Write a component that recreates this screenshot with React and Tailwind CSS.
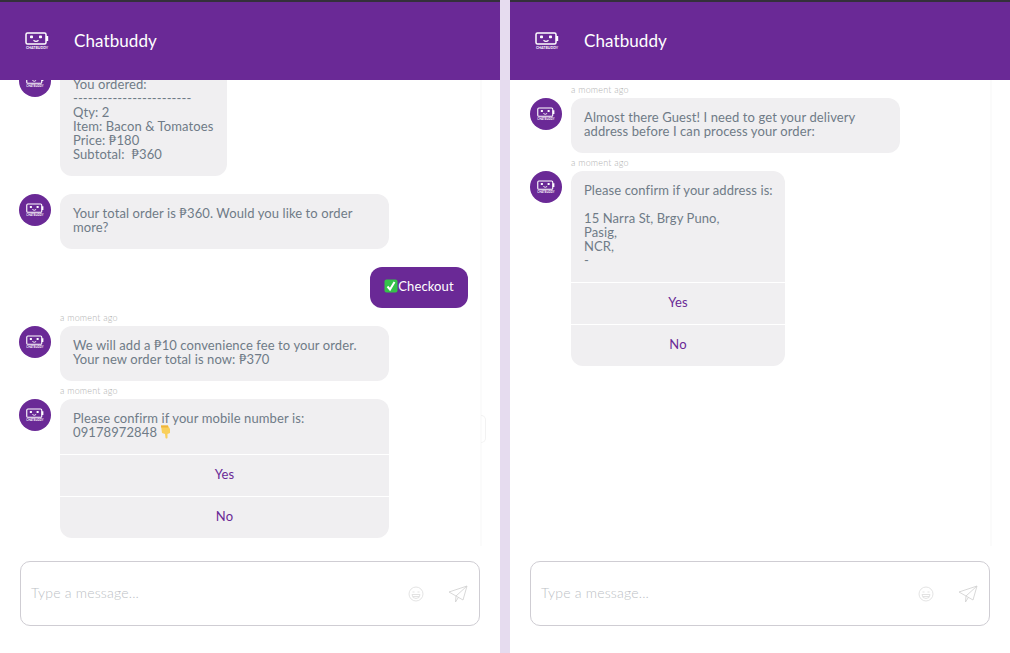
import React from 'react';

const BotLogo = ({ className }) => (
  <svg viewBox="0 0 24 18" className={className} fill="none">
    {/* battery shaped robot head */}
    <rect x="1" y="1" width="20" height="11" rx="1.5" stroke="#fff" strokeWidth="1.5" />
    <rect x="21" y="4" width="2.2" height="5" fill="#fff" />
    <rect x="5" y="3.6" width="3" height="2.6" rx="0.8" fill="#fff" />
    <rect x="14" y="3.6" width="3" height="2.6" rx="0.8" fill="#fff" />
    <path d="M8.5 8.3 Q11 10.6 13.5 8.3" stroke="#fff" strokeWidth="1.2" />
    <text x="12" y="17" textAnchor="middle" fontSize="3.6" fill="#fff" fontFamily="Lato, sans-serif" fontWeight="700">CHATBUDDY</text>
  </svg>
);

const Avatar = () => (
  <div className="w-8 h-8 shrink-0 rounded-full bg-[#6a2996] flex items-center justify-center">
    <BotLogo className="w-[18px] h-[14px]" />
  </div>
);

const CheckEmoji = () => (
  <svg viewBox="0 0 14 14" className="inline-block w-[14px] h-[14px] align-[-2px]">
    <rect x="0.5" y="0.5" width="13" height="13" rx="2" fill="#35c24a" />
    <path d="M3.5 7.5 L6 10.5 L10.5 3" stroke="#fff" strokeWidth="2" fill="none" />
  </svg>
);

const PointDownEmoji = () => (
  <svg viewBox="0 0 12 14" className="inline-block w-[12px] h-[14px] align-top ml-[3px]">
    <path d="M1 0.5 H8 L10 4 V8 L7.5 9 V13 Q6.5 14 5.5 13 L5 9 L2 8 Z" fill="#f9cf5a" />
    <rect x="1" y="0.5" width="7" height="2" fill="#efb43c" />
  </svg>
);

const SmileIcon = () => (
  <svg viewBox="0 0 16 16" className="w-4 h-4" fill="none" stroke="#dcdcdc" strokeWidth="0.8">
    <circle cx="8" cy="8" r="7" />
    <path d="M4.5 6 H6.5 M9.5 6 H11.5" />
    <path d="M4 8.5 H12 Q12 12.5 8 12.5 Q4 12.5 4 8.5 Z" />
    <path d="M5 10.5 H11" />
  </svg>
);

const SendIcon = () => (
  <svg viewBox="0 0 20 18" className="w-5 h-[18px]" fill="none" stroke="#d4d4d4" strokeWidth="0.9" strokeLinejoin="round">
    <path d="M1 7 L19 1 L15 15 L8 11 Z" />
    <path d="M19 1 L8 11 L7.5 17 L10.5 12.2" />
  </svg>
);

const Message = ({ time, children, width = 'w-[329px]' }) => (
  <div className={time ? 'mt-[5px]' : 'mt-[18px]'}>
    {time && <div className="h-[9px] mb-[4px] ml-[41px] text-[9px] leading-[9px] font-light tracking-[0.2px] text-[#b0b0b0]">a moment ago</div>}
    <div className="flex gap-[9px] items-start">
      <Avatar />
      <div className={`${width} bg-[#f0eff1] rounded-xl text-[#6f7b87] overflow-hidden`}>{children}</div>
    </div>
  </div>
);

const BubbleText = ({ children }) => (
  <div className="pl-[13px] pr-3 pt-[12px] pb-[15px] whitespace-pre-wrap">{children}</div>
);

const QuickReply = ({ label }) => (
  <div className="h-[42px] pb-[3px] border-t border-white flex items-center justify-center text-[#6a2996]">{label}</div>
);

const Panel = ({ sidePad, justify, children, handle }) => (
  <div className="relative w-[500px] h-full flex flex-col bg-white">
    <div className="h-20 shrink-0 border-t-2 border-[#34303a] bg-[#6a2996] flex items-center pl-[25px] z-10">
      <BotLogo className="w-6 h-[18px]" />
      <span className="ml-[25px] text-[17px] tracking-[0.1px] text-white">Chatbuddy</span>
    </div>
    <div className={`flex-1 min-h-0 overflow-hidden flex flex-col ${justify} ${sidePad} pb-[8px] text-[13px] leading-[14px] tracking-[0.1px] ml-[6px] mr-[18px] border-r-2 border-[#fbfbfb]`}>
      {children}
    </div>
    {handle && <div className="absolute left-[481px] top-[415px] w-[5px] h-[28px] rounded-r-full border border-l-0 border-[#f2f2f2]" />}
    <div className="h-[107px] shrink-0 px-5 pt-[15px]">
      <div className="h-[65px] border border-[#cfcdd3] rounded-[10px] flex items-center pl-[10px] pr-[11px]">
        <span className="flex-1 text-sm tracking-[0.2px] pb-[2px] text-[#bcbfc5] font-light">Type a message...</span>
        <SmileIcon />
        <div className="ml-[24px]"><SendIcon /></div>
      </div>
    </div>
  </div>
);

export default function App() {
  return (
    <div className="w-[1010px] h-[653px] flex overflow-hidden bg-[#e6dcef] font-['Lato',sans-serif]">
      <Panel sidePad="pl-[13px]" justify="justify-end" handle>
        <Message width="w-[167px]">
          <BubbleText>{'You ordered:\n------------------------\nQty: 2\nItem: Bacon & Tomatoes\nPrice: ₱180\nSubtotal:  ₱360'}</BubbleText>
        </Message>
        <Message>
          <BubbleText>{'Your total order is ₱360. Would you like to order more?'}</BubbleText>
        </Message>
        <div className="mt-[18px] flex justify-end pr-[12px]">
          <div className="w-[98px] h-[41px] pb-[3px] rounded-xl bg-[#6a2996] text-white flex items-center justify-center">
            <CheckEmoji />Checkout
          </div>
        </div>
        <Message time>
          <BubbleText>{'We will add a ₱10 convenience fee to your order.\nYour new order total is now: ₱370'}</BubbleText>
        </Message>
        <Message time>
          <BubbleText>
            {'Please confirm if your mobile number is:\n09178972848'}
            <PointDownEmoji />
          </BubbleText>
          <QuickReply label="Yes" />
          <QuickReply label="No" />
        </Message>
      </Panel>
      <div className="w-[10px] shrink-0" />
      <Panel sidePad="pl-[14px]" justify="justify-start">
        <Message time>
          <BubbleText>{'Almost there Guest! I need to get your delivery address before I can process your order:'}</BubbleText>
        </Message>
        <Message time width="w-[214px]">
          <BubbleText>{'Please confirm if your address is:\n\n15 Narra St, Brgy Puno,\nPasig,\nNCR,\n-'}</BubbleText>
          <QuickReply label="Yes" />
          <QuickReply label="No" />
        </Message>
      </Panel>
    </div>
  );
}
